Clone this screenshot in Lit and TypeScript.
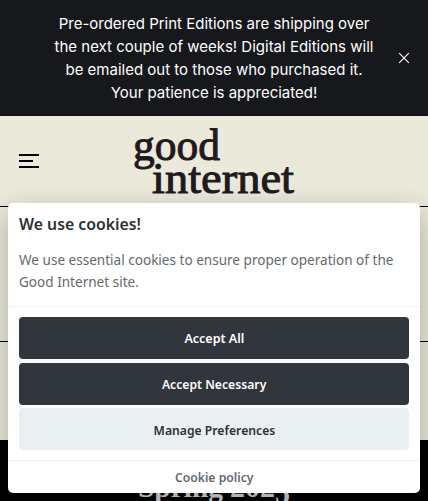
import { LitElement, html, css, svg } from "lit";
import { customElement } from "lit/decorators.js";

@customElement("site-banner")
class SiteBanner extends LitElement {
  static styles = css`
    :host { display: flex; align-items: center; height: 116px; box-sizing: border-box; background: #17181c; color: #fff; padding: 0 18px 0 48px; border-bottom: 1px solid #17101b; }
    p { margin: 1px 0 0; width: 332px; text-align: center; white-space: nowrap; font: 400 15px/23px Inter, sans-serif; }
    .close { margin-left: auto; display: block; }
  `;
  render() {
    return html`<p>Pre-ordered Print Editions are shipping over<br />the next couple of weeks! Digital Editions will<br />be emailed out to those who purchased it.<br />Your patience is appreciated!</p>
      <svg class="close" width="12" height="12" viewBox="0 0 12 12"><path d="M1.2 1.2l9.6 9.6M10.8 1.2l-9.6 9.6" stroke="#fff" stroke-width="1.1" /></svg>`;
  }
}

@customElement("site-header")
class SiteHeader extends LitElement {
  static styles = css`
    :host { display: flex; align-items: flex-start; height: 91px; box-sizing: border-box; border-bottom: 1px solid #000; padding-left: 19px; }
    .menu { display: block; margin-top: 37px; }
    .logo { display: block; margin: 4px 0 0 94px; overflow: visible; }
    text { font-family: "Liberation Serif", serif; font-size: 45px; fill: #1f1a1e; stroke: #1f1a1e; stroke-width: 1px; }
  `;
  render() {
    return html`<svg class="menu" width="20" height="16" viewBox="0 0 20 16"><path d="M0 2h20M0 8h14M0 14h20" stroke="#000" stroke-width="2" /></svg>
      <svg class="logo" width="161" height="82" viewBox="0 0 161 82">
        ${svg`<text x="0" y="40" textLength="87" lengthAdjust="spacingAndGlyphs">good</text>
        <text x="19" y="73" textLength="142" lengthAdjust="spacingAndGlyphs">internet</text>`}
      </svg>`;
  }
}

@customElement("cookie-dialog")
class CookieDialog extends LitElement {
  static styles = css`
    :host { display: block; height: 290px; background: #fff; border-radius: 5px; box-shadow: 0 10px 30px rgba(2, 2, 3, 0.28); font-family: "Noto Sans", sans-serif; color: #2d3134; overflow: hidden; }
    .copy { height: 103px; padding: 10px 11px 0; box-sizing: border-box; }
    h2 { margin: 0; font-size: 16.8px; line-height: 22px; font-weight: 600; white-space: nowrap; transform: scaleX(0.942); transform-origin: left; }
    p { margin: 14px 0 0; font-size: 14.4px; line-height: 22px; color: #646a70; white-space: nowrap; transform: scaleX(0.942); transform-origin: left; }
    .buttons { height: 155px; box-sizing: border-box; border-top: 1px solid #f1f3f5; border-bottom: 1px solid #f1f3f5; padding: 10px 11px; display: flex; flex-direction: column; }
    button { height: 42px; flex: none; margin: 0 0 4px; border: 0; padding: 0; border-radius: 4px; background: #30363c; color: #fff; font: 600 13.1px/42px "Noto Sans", sans-serif; }
    .second { margin-bottom: 3px; }
    .light { background: #eaeff2; color: #2d3134; line-height: 44px; }
    .policy { text-align: center; font-size: 13.1px; line-height: 33px; font-weight: 600; color: #646a70; }
    span { display: inline-block; transform: scaleX(0.93); }
    .short { transform: scaleX(0.955); }
  `;
  render() {
    return html`<div class="copy"><h2>We use cookies!</h2><p>We use essential cookies to ensure proper operation of the<br />Good Internet site.</p></div>
      <div class="buttons"><button><span class="short">Accept All</span></button><button class="second"><span>Accept Necessary</span></button><button class="light"><span>Manage Preferences</span></button></div>
      <div class="policy"><span>Cookie policy</span></div>`;
  }
}

@customElement("app-root")
class AppRoot extends LitElement {
  static styles = css`
    :host { display: block; position: relative; width: 428px; height: 501px; overflow: hidden; background: #ebe9da; }
    .intro { height: 134px; border-bottom: 1px solid #000; }
    .gap { height: 98px; }
    .issue { height: 61px; background: #000; overflow: hidden; }
    .title { display: block; margin: 24px auto 0; overflow: visible; }
    .title text { font-family: "Liberation Serif", serif; font-weight: 700; font-size: 29px; fill: #dcdcda; }
    cookie-dialog { position: absolute; left: 8px; right: 8px; bottom: 8px; }
  `;
  render() {
    return html`<site-banner></site-banner><site-header></site-header>
      <div class="intro"></div><div class="gap"></div>
      <div class="issue"><svg class="title" width="152" height="44" viewBox="0 0 152 44">
        <text x="0" y="33" textLength="85" lengthAdjust="spacingAndGlyphs">Spring</text>
        <text x="92" y="33" textLength="60" lengthAdjust="spacingAndGlyphs">202<tspan dy="6">5</tspan></text>
      </svg></div>
      <cookie-dialog></cookie-dialog>`;
  }
}
